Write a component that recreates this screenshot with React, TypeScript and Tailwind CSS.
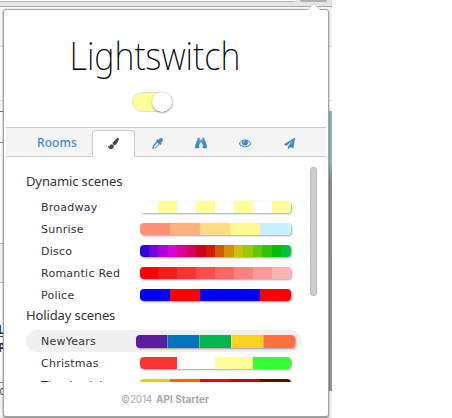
import React from 'react';

type SceneProps = { name: string; colors: string[]; active?: boolean };

function Scene({ name, colors, active }: SceneProps) {
  return (
    <div className={`flex h-[22px] w-[275px] shrink-0 items-center rounded-full pl-[15px] ${active ? 'bg-[#f0f0f0]' : ''}`}>
      <span className={`shrink-0 whitespace-nowrap pt-px text-[11px] leading-[22px] tracking-[0.25px] text-[#333] ${active ? 'w-[94.5px]' : 'w-[98.5px]'}`}>{name}</span>
      <div className={`flex shrink-0 overflow-hidden rounded-[4px] shadow-[1px_1px_2px_rgba(0,0,0,0.35)] ${active ? 'h-[13px] w-[159px]' : 'h-3 w-[151px]'}`}>
        {colors.map((c, i) => (
          <div key={i} className={`flex-1 ${active && i > 0 ? 'border-l border-white/30' : ''}`} style={{ backgroundColor: c }} />
        ))}
      </div>
    </div>
  );
}

const cream = '#ffff99';
const dynamicScenes: SceneProps[] = [
  { name: 'Broadway', colors: ['#fff', cream, '#fff', cream, '#fff', cream, '#fff', cream] },
  { name: 'Sunrise', colors: ['#ff8f75', '#ffb27a', '#ffdc82', '#fff78f', '#c9f0ff'] },
  { name: 'Disco', colors: ['#3300e6', '#7300e0', '#aa00dc', '#dc00d2', '#dc0096', '#dc005a', '#d2001e', '#d21e00', '#d25a00', '#d29100', '#cdc300', '#9bcb00', '#64c800', '#32c300', '#00c000', '#00c241'] },
  { name: 'Romantic Red', colors: ['#ff0000', '#ff1a1a', '#ff3333', '#ff4d4d', '#ff6666', '#ff8080', '#ff9999', '#ffb3b3'] },
  { name: 'Police', colors: ['#00f', '#f00', '#00f', '#00f', '#f00'] },
];
const holidayScenes: SceneProps[] = [
  { name: 'NewYears', active: true, colors: ['#5a1e9b', '#0073b9', '#00b450', '#ffd21e', '#ff703c'] },
  { name: 'Christmas', colors: ['#ff3333', '#fff', cream, '#33ff33'] },
  { name: 'Thanksgiving', colors: ['#ffc300', '#ff6400', '#f50000', '#c80000', '#640a00'] },
];

const icons = {
  brush: 'M1615 0q70 0 122.5 46.5t52.5 116.5q0 63-45 151-332 629-465 752-97 91-218 91-126 0-216.5-92.5t-90.5-219.5q0-128 92-212l638-579q59-54 130-54zm-909 1034q39 76 106.5 130t150.5 76l1 71q4 213-129.5 347t-348.5 134q-123 0-218-46.5t-152.5-127.5-86.5-183-29-220q7 5 41 30t62 44.5 59 36.5 46 17q41 0 55-37 25-66 57.5-112.5t69.5-76 88-47.5 103-25.5 125-10.5z',
  dropper: 'M1698 94q94 94 94 226.5t-94 225.5l-225 223 104 104q10 10 10 23t-10 23l-210 210q-10 10-23 10t-23-10l-105-105-603 603q-37 37-90 37h-203l-256 128-64-64 128-256v-203q0-53 37-90l603-603-105-105q-10-10-10-23t10-23l210-210q10-10 23-10t23 10l104 104 223-225q93-94 225.5-94t226.5 94zm-1186 1442l576-576-192-192-576 576v192h192z',
  binoculars: 'M384 128h320v200H384zM1088 128h320v200h-320zM340 390h380v650l-80 80v480q0 64-64 64H64q-64 0-64-64v-250zM1072 390h380l340 960v250q0 64-64 64h-512q-64 0-64-64v-480l-80-80zM784 390h224v480H784z',
  eye: 'M1664 960q-152-236-381-353 61 104 61 225 0 185-131.5 316.5t-316.5 131.5-316.5-131.5-131.5-316.5q0-121 61-225-229 117-381 353 133 205 333.5 326.5t434.5 121.5 434.5-121.5 333.5-326.5zm-720-384q0-20-14-34t-34-14q-125 0-214.5 89.5t-89.5 214.5q0 20 14 34t34 14 34-14 14-34q0-86 61-147t147-61q20 0 34-14t14-34zm848 384q0 34-20 69-140 230-376.5 368.5t-499.5 138.5-499.5-139-376.5-368q-20-35-20-69t20-69q140-229 376.5-368t499.5-139 499.5 139 376.5 368q20 35 20 69z',
  plane: 'M1764 11q33 24 27 64l-256 1536q-5 29-32 45-14 8-31 8-11 0-24-5l-453-185-242 295q-18 23-49 23-13 0-22-4-19-7-30.5-23.5t-11.5-36.5v-349l864-1059-1069 925-395-162q-37-14-40-55-2-40 32-59l1664-960q15-9 32-9 20 0 36 11z',
};

function Icon({ name, size }: { name: keyof typeof icons; size: number }) {
  return (
    <svg width={size} height={size} viewBox="0 0 1792 1792" fill="currentColor">
      <path d={icons[name]} />
    </svg>
  );
}

function Backdrop() {
  return (
    <div className="flex h-[418px] w-[332px] flex-col overflow-hidden bg-[#f7f7f7]">
      <div className="flex h-[7px] shrink-0 justify-end border-b border-[#aaa] bg-[#e5e7e5]">
        <div className="h-[2px] w-[295px] border-b border-[#b5b5b5] bg-white" />
        <div className="ml-[5px] mr-[5px] h-[2px] w-[27px] rounded-b bg-[#b0b0b0]" />
      </div>
      <div className="flex min-h-0 flex-1 justify-between">
        <div className="flex w-[5px] flex-col overflow-hidden bg-white text-[12px] leading-[14px] text-[#333]">
          <div className="h-[40px] shrink-0 border-b border-[#ddd] bg-[#f7f7f7]" />
          <div className="h-[54px] shrink-0 border-b border-[#ddd]" />
          <div className="h-[11px] shrink-0 border-b border-[#777]" />
          <div className="h-[31px] shrink-0 border-b border-[#888]" />
          <div className="h-[101px] shrink-0 border-b border-[#bbb]" />
          <div className="h-[39px] shrink-0 border-b border-[#bbb] bg-[#f3f3f3]" />
          <div className="h-[54px] shrink-0 border-b border-[#444] pt-[40px] font-bold"><span className="-ml-[2px]">L</span></div>
          <div className="h-[46px] shrink-0 border-b border-[#888] pt-[4px] font-bold"><span className="-ml-[2px]">P</span></div>
          <div className="flex-1 bg-[#f5f5f5] pt-px text-[#666]"><span className="-ml-px">c</span></div>
        </div>
        <div className="flex w-[4px] flex-col bg-white">
          <div className="h-[40px] shrink-0 border-b border-[#ddd] bg-[#f7f7f7]" />
          <div className="h-[54px] shrink-0 border-b border-[#ddd]" />
          <div className="h-[10px] shrink-0" />
          <div className="h-[280px] shrink-0 bg-linear-to-b from-[#8eb9bb] from-18% via-[#888b91] via-25% to-[#95959b]" />
          <div className="flex-1 bg-[#f5f5f5]" />
        </div>
      </div>
    </div>
  );
}

export default function App() {
  return (
    <div className="relative h-[418px] w-[452px] overflow-hidden bg-white">
      <Backdrop />
      <div className="absolute top-[9px] left-[3px] flex h-[408px] w-[326px] flex-col rounded-[3px] border border-[#a5a5a5] bg-white px-[2px] font-['DejaVu_Sans',sans-serif] shadow-[0_1px_2px_rgba(0,0,0,0.55)]">
        <svg className="absolute -top-[7px] left-[303px]" width="14" height="8" viewBox="0 0 14 8">
          <path d="M0 7.5 7 0.5 14 7.5V8H0z" fill="#fff" />
          <path d="M1 6.5 7 .7 13 6.5" fill="none" stroke="#bbb" strokeWidth=".7" />
        </svg>
        <header className="flex h-[117px] shrink-0 flex-col items-center pr-[24px] pt-[18px]">
          <h1 className="h-[64px] origin-center scale-x-[0.9] whitespace-nowrap pl-[1px] font-['Noto_Sans',sans-serif] text-[38px] leading-[55px] font-extralight text-black">Lightswitch</h1>
          <div className="-ml-[3px] flex h-5 w-[41px] shrink-0 items-center justify-end rounded-full border border-[#ddd] bg-[#ffff99]">
            <div className="h-5 w-5 rounded-full bg-white shadow-[0_1px_2px_rgba(0,0,0,0.4)]" />
          </div>
        </header>
        <nav className="flex h-[30px] shrink-0 border-y border-[#ccc] bg-[#f4f4f4] text-[#428bca]">
          <div className="w-[86px] shrink-0 pl-[31px] font-['Noto_Sans',sans-serif] text-[12px] leading-[30px] font-medium tracking-[0.1px]">Rooms</div>
          <div className="mt-[2px] flex h-[27px] w-[43px] shrink-0 items-center justify-center rounded-t-[4px] border border-b-0 border-[#ccc] bg-white pb-[2px] text-[#444]"><Icon name="brush" size={11} /></div>
          <div className="flex w-[44px] shrink-0 items-center justify-center pt-[2px]"><Icon name="dropper" size={11} /></div>
          <div className="flex w-[44px] shrink-0 items-center justify-center pt-[2px]"><Icon name="binoculars" size={12} /></div>
          <div className="flex w-[44px] shrink-0 items-center justify-center pt-[2px]"><Icon name="eye" size={12} /></div>
          <div className="flex w-[44px] shrink-0 items-center justify-center pt-[2px]"><Icon name="plane" size={11} /></div>
        </nav>
        <main className="flex h-[225px] shrink-0 overflow-hidden pl-[20px]">
          <div className="flex w-[283px] shrink-0 flex-col">
            <h2 className="h-[39px] shrink-0 pt-[12px] font-['Noto_Sans',sans-serif] text-[13px] leading-[24px] tracking-[-0.12px] text-[#333]">Dynamic scenes</h2>
            {dynamicScenes.map(s => <Scene key={s.name} {...s} />)}
            <h2 className="h-6 shrink-0 font-['Noto_Sans',sans-serif] text-[13px] leading-[19px] tracking-[-0.12px] text-[#333]">Holiday scenes</h2>
            {holidayScenes.map(s => <Scene key={s.name} {...s} />)}
          </div>
          <div className="mt-[10px] ml-px h-[129px] w-[7px] rounded-[3px] border border-[#bbb] bg-[#ccc]" />
        </main>
        <footer className="flex flex-1 gap-[4px] pl-[115px] font-['Inter',sans-serif] text-[10px] leading-[35px] text-[#aaa]">
          <span className="tracking-[-0.2px]">©2014</span><span className="font-bold">API Starter</span>
        </footer>
      </div>
    </div>
  );
}
